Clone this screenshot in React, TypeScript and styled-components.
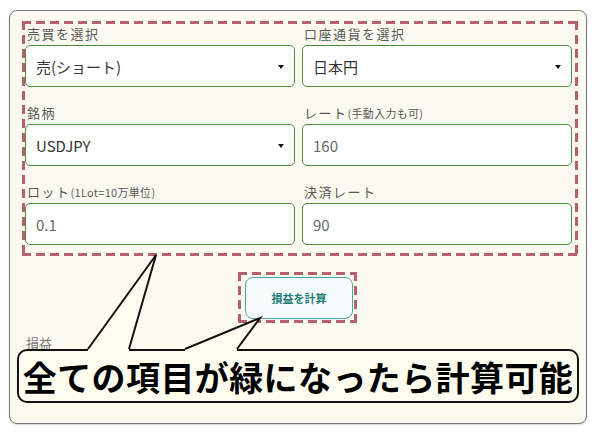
import React from 'react';
import styled, { createGlobalStyle } from 'styled-components';

const GlobalStyle = createGlobalStyle`
    html, body {
        margin: 0;
        padding: 0;
        background: #ffffff;
    }
    body {
        font-family: "Noto Sans CJK JP", "Noto Sans", sans-serif;
        color: #333;
    }
`;

const Page = styled.div`
    position: relative;
    width: 600px;
    height: 434px;
    padding: 10px 0 0 9px;
    box-sizing: border-box;
`;

const Card = styled.div`
    width: 578px;
    height: 414px;
    box-sizing: border-box;
    border: 1px solid #777;
    border-radius: 8px;
    background: #fcfaf0;
    padding: 10px 0 0 12px;
    box-shadow: 0 1px 2px rgba(0, 0, 0, 0.15);
`;

// dashed frame drawn with gradients so the dash length matches the screenshot
const dash = '#b5606e';
const DashedBox = styled.div`
    padding: 3px;
    background:
        repeating-linear-gradient(90deg, ${dash} 0 9px, transparent 9px 14px) top left / 100% 3px no-repeat,
        repeating-linear-gradient(90deg, ${dash} 0 9px, transparent 9px 14px) bottom left / 100% 3px no-repeat,
        repeating-linear-gradient(180deg, ${dash} 0 9px, transparent 9px 14px) top left / 3px 100% no-repeat,
        repeating-linear-gradient(180deg, ${dash} 0 9px, transparent 9px 14px) top right / 3px 100% no-repeat;
`;

const FormBox = styled(DashedBox)`
    width: 556px;
    box-sizing: border-box;
    padding: 3px 6px 11px 3px;
    display: grid;
    grid-template-columns: 270px 270px;
    column-gap: 7px;
    row-gap: 16px;
`;

const Field = styled.div`
    display: flex;
    flex-direction: column;
    gap: 1px;
`;

const Label = styled.div`
    height: 20px;
    line-height: 20px;
    font-size: 13px;
    letter-spacing: 1.5px;
    color: #595959;
    padding-left: 2px;
    white-space: nowrap;
`;

const Note = styled.span`
    font-size: 11px;
    letter-spacing: 0.3px;
`;

const Control = styled.div<{ $muted?: boolean }>`
    height: 42px;
    box-sizing: border-box;
    border: 1.5px solid #4d8f3f;
    border-radius: 5px;
    background: #ffffff;
    display: flex;
    align-items: center;
    justify-content: space-between;
    padding: 0 10px 0 10px;
    font-size: 15px;
    color: ${(p) => (p.$muted ? '#666' : '#333')};
`;

const Caret = styled.span`
    width: 0;
    height: 0;
    border-left: 3.5px solid transparent;
    border-right: 3.5px solid transparent;
    border-top: 4px solid #111;
    margin-top: 1px;
`;

const ButtonRow = styled.div`
    display: flex;
    justify-content: center;
    width: 551px;
    margin-top: 16px;
`;

const ButtonBox = styled(DashedBox)`
    padding: 5px 4px 4px 7px;
`;

const CalcButton = styled.button`
    display: block;
    width: 108px;
    height: 42px;
    border: 1.5px solid #4aa3a0;
    border-radius: 8px;
    background: #f5fbfa;
    color: #1f7c79;
    font-family: "Noto Sans CJK JP", sans-serif;
    font-size: 11px;
    font-weight: 700;
    cursor: pointer;
`;

const ResultLabel = styled.div`
    margin-top: 10px;
    padding-left: 4px;
    font-size: 13px;
    line-height: 20px;
    color: #777;
`;

const Callout = styled.div`
    position: absolute;
    left: 17px;
    top: 349px;
    width: 562px;
    height: 54px;
    box-sizing: border-box;
    border: 2px solid #111;
    border-radius: 10px;
    background: #fdfcef;
    display: flex;
    align-items: center;
    justify-content: center;
    font-size: 34px;
    font-weight: 700;
    color: #000;
    letter-spacing: 0.4px;
    white-space: nowrap;
`;

const Tails = styled.svg`
    position: absolute;
    left: 0;
    top: 0;
    pointer-events: none;
`;

type FieldDef = {
    label: string;
    note?: string;
    value: string;
    select?: boolean;
};

const fields: FieldDef[] = [
    { label: '売買を選択', value: '売(ショート)', select: true },
    { label: '口座通貨を選択', value: '日本円', select: true },
    { label: '銘柄', value: 'USDJPY', select: true },
    { label: 'レート', note: '(手動入力も可)', value: '160' },
    { label: 'ロット', note: '(1Lot=10万単位)', value: '0.1' },
    { label: '決済レート', value: '90' },
];

// callout pointers: [base-left, tip, base-right]
const tails: [number, number][][] = [
    [
        [88, 349],
        [156, 255],
        [129, 349],
    ],
    [
        [185, 349],
        [260, 318],
        [237, 349],
    ],
];

const App = () => {
    return (
        <Page>
            <GlobalStyle />
            <Card>
                <FormBox>
                    {fields.map((f) => (
                        <Field key={f.label}>
                            <Label>
                                {f.label}
                                {f.note && <Note>{f.note}</Note>}
                            </Label>
                            <Control $muted={!f.select}>
                                <span>{f.value}</span>
                                {f.select && <Caret />}
                            </Control>
                        </Field>
                    ))}
                </FormBox>
                <ButtonRow>
                    <ButtonBox>
                        <CalcButton>損益を計算</CalcButton>
                    </ButtonBox>
                </ButtonRow>
                <ResultLabel>損益</ResultLabel>
            </Card>
            <Callout>全ての項目が緑になったら計算可能</Callout>
            <Tails width={600} height={434} viewBox="0 0 600 434">
                {tails.map((t, i) => (
                    <g key={i}>
                        <path
                            d={`M${t[0][0]} ${t[0][1] + 3} L${t[0][0]} ${t[0][1]} L${t[1][0]} ${t[1][1]} L${t[2][0]} ${t[2][1]} L${t[2][0]} ${t[2][1] + 3} Z`}
                            fill="#fdfcef"
                        />
                        <polyline
                            points={t.map((p) => p.join(',')).join(' ')}
                            fill="none"
                            stroke="#111"
                            strokeWidth={2}
                            strokeLinejoin="miter"
                        />
                    </g>
                ))}
            </Tails>
        </Page>
    );
};

export default App;
